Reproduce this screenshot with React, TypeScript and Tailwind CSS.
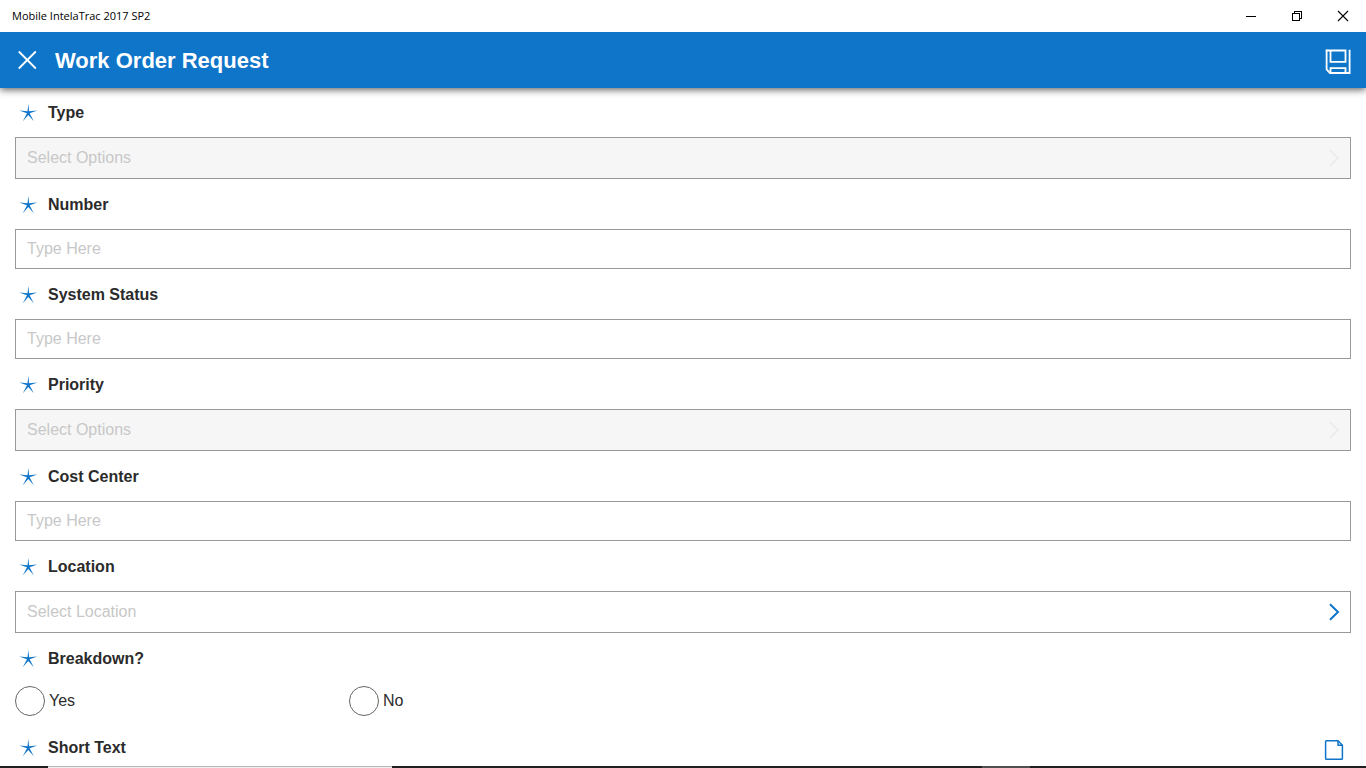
import type { ReactNode } from 'react';

const Star = () => (
  <svg className="h-5 w-5 shrink-0" viewBox="0 0 20 20" fill="#0f75c9" aria-hidden="true">
    <path d="M10.3 1 L11.1 8.2 L19.4 7.6 L11.6 10.3 L15.8 18.2 L10.3 11.9 L4.8 18.2 L9 10.3 L1.2 7.6 L9.5 8.2 Z" />
  </svg>
);

const Chevron = ({ className }: { className: string }) => (
  <svg className={`h-5 w-3 shrink-0 ${className}`} viewBox="0 0 12 20" fill="none" stroke="currentColor" strokeWidth="2" aria-hidden="true">
    <path d="M2 2.2 L10 10 L2 17.8" />
  </svg>
);

const labelText = "font-['Arial_Rounded_MT_Bold','Liberation_Sans',sans-serif] text-base leading-6 font-bold text-[#2b2b2b]";

const FieldLabel = ({ id, children }: { id: string; children: ReactNode }) => (
  <label htmlFor={id} className={`flex h-6 items-center gap-[10px] pl-[3px] ${labelText}`}>
    <Star />
    {children}
  </label>
);

type TextFieldProps = { id: string; label: string };

const TextField = ({ id, label }: TextFieldProps) => (
  <div className="flex flex-col gap-3">
    <FieldLabel id={id}>{label}</FieldLabel>
    <input
      id={id}
      type="text"
      placeholder="Type Here"
      className="h-10 w-full border border-[#999999] bg-white px-[11px] text-base text-[#2b2b2b] outline-none placeholder:text-[#c8c8c8]"
    />
  </div>
);

type SelectFieldProps = { id: string; label: string; placeholder: string; disabled?: boolean };

const SelectField = ({ id, label, placeholder, disabled = false }: SelectFieldProps) => (
  <div className="flex flex-col gap-3">
    <FieldLabel id={id}>{label}</FieldLabel>
    <div className={`flex h-[42px] items-center border border-[#999999] pr-[10px] ${disabled ? 'bg-[#f6f6f6]' : 'bg-white'}`}>
      <select
        id={id}
        disabled={disabled}
        defaultValue=""
        className="h-full min-w-0 flex-1 appearance-none bg-transparent px-[11px] text-base text-[#c8c8c8] opacity-100 outline-none"
      >
        <option value="">{placeholder}</option>
      </select>
      <Chevron className={disabled ? 'text-[#ececec]' : 'text-[#0f75c9]'} />
    </div>
  </div>
);

const Choice = ({ value }: { value: string }) => (
  <label className="flex w-1/4 items-center gap-1 text-base text-[#2b2b2b]">
    <input
      type="radio"
      name="breakdown"
      value={value}
      className="h-[30px] w-[30px] appearance-none rounded-full border border-[#666666] bg-white checked:border-[9px] checked:border-[#0f75c9]"
    />
    {value}
  </label>
);

const TitleBar = () => (
  <div className="relative z-10 flex h-8 shrink-0 items-center justify-between bg-white pl-3">
    <span className="font-['Segoe_UI','Open_Sans',sans-serif] text-[11px] text-black">Mobile IntelaTrac 2017 SP2</span>
    <div className="flex h-full text-black">
      <button type="button" aria-label="Minimize" className="flex w-[46px] items-center justify-center">
        <svg className="h-3 w-3" viewBox="0 0 12 12" fill="none" stroke="currentColor" shapeRendering="crispEdges">
          <path d="M1 6.5 H11" />
        </svg>
      </button>
      <button type="button" aria-label="Restore" className="flex w-[46px] items-center justify-center">
        <svg className="h-3 w-3" viewBox="0 0 12 12" fill="none" stroke="currentColor" shapeRendering="crispEdges">
          <path d="M1.5 3.5 H8.5 V10.5 H1.5 Z M3.5 3.5 V1.5 H10.5 V8.5 H8.5" />
        </svg>
      </button>
      <button type="button" aria-label="Close window" className="flex w-[46px] items-center justify-center">
        <svg className="h-3 w-3" viewBox="0 0 12 12" fill="none" stroke="currentColor" strokeWidth="1.1">
          <path d="M1 1 L11 11 M11 1 L1 11" />
        </svg>
      </button>
    </div>
  </div>
);

const Header = () => (
  <header className="relative flex h-14 shrink-0 items-center bg-[#0f75c9] pr-[15px] pl-[17px] text-white shadow-[0_2px_7px_rgba(0,0,0,0.6)]">
    <button type="button" aria-label="Cancel">
      <svg className="h-5 w-5" viewBox="0 0 20 20" fill="none" stroke="currentColor" strokeWidth="1.8">
        <path d="M1.8 1.5 L18.8 18.5 M18.8 1.5 L1.8 18.5" />
      </svg>
    </button>
    <h1 className="ml-[18px] flex-1 pt-[2px] font-['Arial_Rounded_MT_Bold','Liberation_Sans',sans-serif] text-[22px] leading-7 font-bold">
      Work Order Request
    </h1>
    <button type="button" aria-label="Save" className="pt-1">
      <svg className="h-[26px] w-[26px]" viewBox="0 0 26 26" fill="none" stroke="currentColor" strokeWidth="1.8">
        <path d="M1.6 0.8 V20.5 L5 24 H24.6 V0.8" />
        <path d="M0.8 1.5 H20.5 V12.8 H5.5 V1.5" />
        <path d="M5.5 24 V19.2 H20.5 V24" />
      </svg>
    </button>
  </header>
);

const BottomEdge = () => (
  <div className="flex h-[2px] shrink-0 bg-[#221f20]">
    <div className="ml-12 w-[344px] border-t border-[#bababa] bg-[#efefef]" />
    <div className="ml-[590px] w-12 bg-[#505050]" />
  </div>
);

const App = () => {
  return (
    <div className="flex h-screen flex-col overflow-hidden bg-white font-['Liberation_Sans',Arial,sans-serif]">
      <TitleBar />
      <Header />
      <main className="flex min-h-0 flex-1 flex-col gap-[14px] overflow-hidden px-[15px] pt-[13px]">
        <SelectField id="type" label="Type" placeholder="Select Options" disabled />
        <TextField id="number" label="Number" />
        <TextField id="system-status" label="System Status" />
        <SelectField id="priority" label="Priority" placeholder="Select Options" disabled />
        <TextField id="cost-center" label="Cost Center" />
        <SelectField id="location" label="Location" placeholder="Select Location" />

        <fieldset>
          <legend className={`flex h-6 items-center gap-[10px] pl-[3px] ${labelText}`}>
            <Star />
            Breakdown?
          </legend>
          <div className="flex h-[51px] pt-[15px] pb-[6px]">
            <Choice value="Yes" />
            <Choice value="No" />
          </div>
        </fieldset>

        <div className="flex items-end justify-between pr-[7px]">
          <h2 className={`flex h-6 items-center gap-[10px] pl-[3px] ${labelText}`}>
            <Star />
            Short Text
          </h2>
          <button type="button" aria-label="Add short text">
            <svg className="block h-5 w-5" viewBox="0 0 20 20" fill="none" stroke="#0f75c9" strokeWidth="1.5" strokeLinejoin="round">
              <path d="M2.4 0.8 H14 L18.4 5.2 V18.4 Q18.4 19.2 17.6 19.2 H2.4 Q1.6 19.2 1.6 18.4 V1.6 Q1.6 0.8 2.4 0.8 Z" />
              <path d="M14 0.8 V5.2 H18.4" />
            </svg>
          </button>
        </div>
      </main>
      <BottomEdge />
    </div>
  );
};

export default App;
